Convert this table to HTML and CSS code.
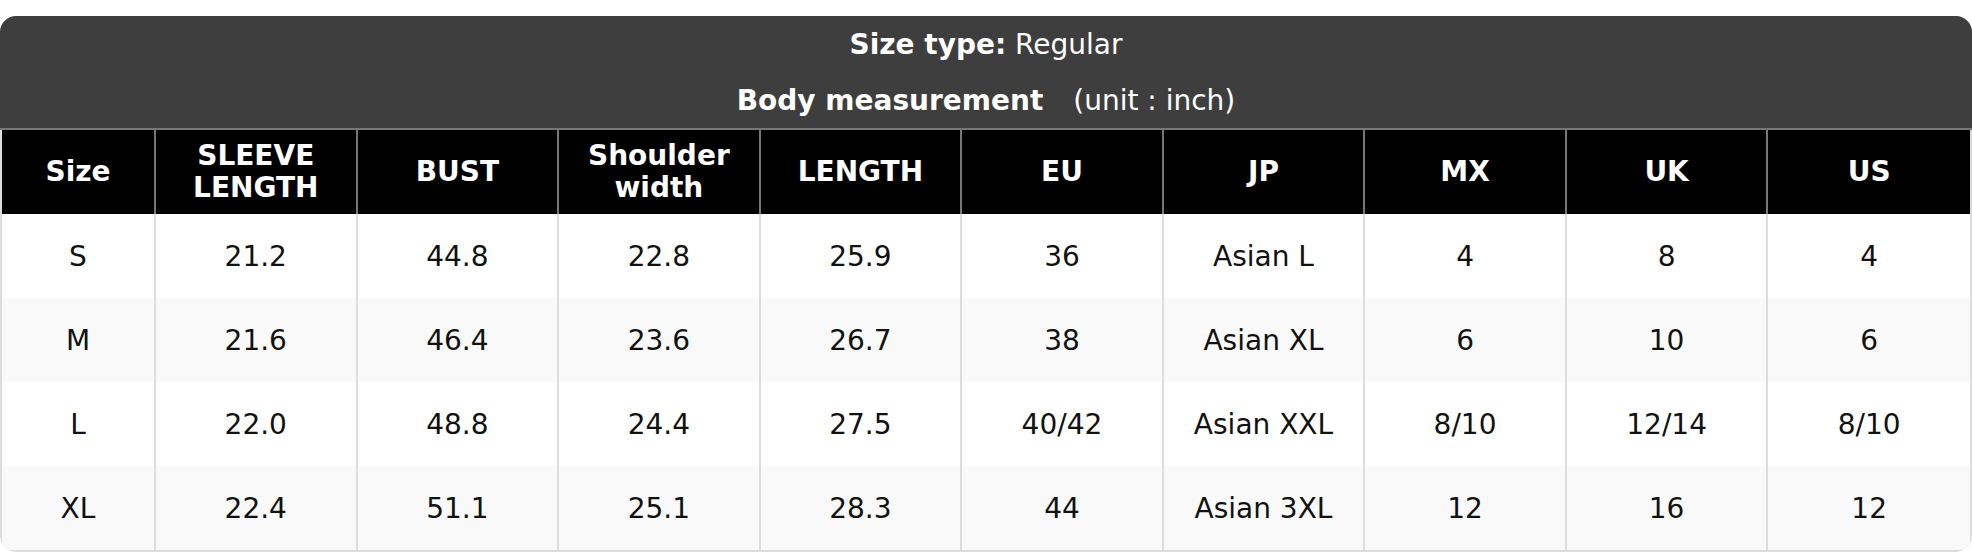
FILE: index.html
```html
<!DOCTYPE html>
<html>
<head>
<meta charset="utf-8">
<link rel="stylesheet" href="styles.css">
</head>
<body>
<div class="chart">
  <div class="chart-head">
    <div class="head-line"><b>Size type:</b> Regular</div>
    <div class="head-line"><b>Body measurement</b><span class="unit">(unit : inch)</span></div>
  </div>
  <table class="size-table">
    <colgroup>
      <col class="col-size">
      <col><col><col><col><col><col><col><col><col>
    </colgroup>
    <thead>
      <tr>
        <th>Size</th>
        <th>SLEEVE<br>LENGTH</th>
        <th>BUST</th>
        <th>Shoulder<br>width</th>
        <th>LENGTH</th>
        <th>EU</th>
        <th>JP</th>
        <th>MX</th>
        <th>UK</th>
        <th>US</th>
      </tr>
    </thead>
    <tbody>
      <tr><td>S</td><td>21.2</td><td>44.8</td><td>22.8</td><td>25.9</td><td>36</td><td>Asian L</td><td>4</td><td>8</td><td>4</td></tr>
      <tr><td>M</td><td>21.6</td><td>46.4</td><td>23.6</td><td>26.7</td><td>38</td><td>Asian XL</td><td>6</td><td>10</td><td>6</td></tr>
      <tr><td>L</td><td>22.0</td><td>48.8</td><td>24.4</td><td>27.5</td><td>40/42</td><td>Asian XXL</td><td>8/10</td><td>12/14</td><td>8/10</td></tr>
      <tr><td>XL</td><td>22.4</td><td>51.1</td><td>25.1</td><td>28.3</td><td>44</td><td>Asian 3XL</td><td>12</td><td>16</td><td>12</td></tr>
    </tbody>
  </table>
</div>
</body>
</html>
```

FILE: styles.css
```css
html, body {
  margin: 0;
  padding: 0;
  background: #ffffff;
}
body {
  font-family: "DejaVu Sans", Verdana, sans-serif;
  padding-top: 16px;
  width: 1972px;
}
.chart {
  border-radius: 16px;
  overflow: hidden;
}
.chart-head {
  background: #3e3e3e;
  color: #ffffff;
  border-bottom: 2px solid #777777;
  height: 112px;
  display: flex;
  flex-direction: column;
}
.head-line {
  height: 56px;
  display: flex;
  align-items: center;
  justify-content: center;
  font-size: 28px;
  white-space: pre;
}
.unit {
  margin-left: 30px;
}
.size-table {
  width: 100%;
  table-layout: fixed;
  border-collapse: separate;
  border-spacing: 0;
  border-left: 2px solid #dddddd;
  border-right: 2px solid #dddddd;
  border-bottom: 2px solid #dddddd;
  border-radius: 0 0 16px 16px;
  box-sizing: border-box;
}
.col-size {
  width: 154px;
}
.size-table th,
.size-table td {
  text-align: center;
  vertical-align: middle;
  padding: 0;
  height: 84px;
  border-right: 2px solid #dddddd;
}
.size-table th:last-child,
.size-table td:last-child {
  border-right: none;
}
.size-table th {
  background: #000000;
  color: #ffffff;
  font-weight: bold;
  font-size: 28px;
  line-height: 32px;
  border-right-color: #777777;
}
.size-table td {
  color: #111111;
  font-size: 28px;
  background: #ffffff;
}
.size-table tbody tr:nth-child(even) td {
  background: #f9f9f9;
}
```
